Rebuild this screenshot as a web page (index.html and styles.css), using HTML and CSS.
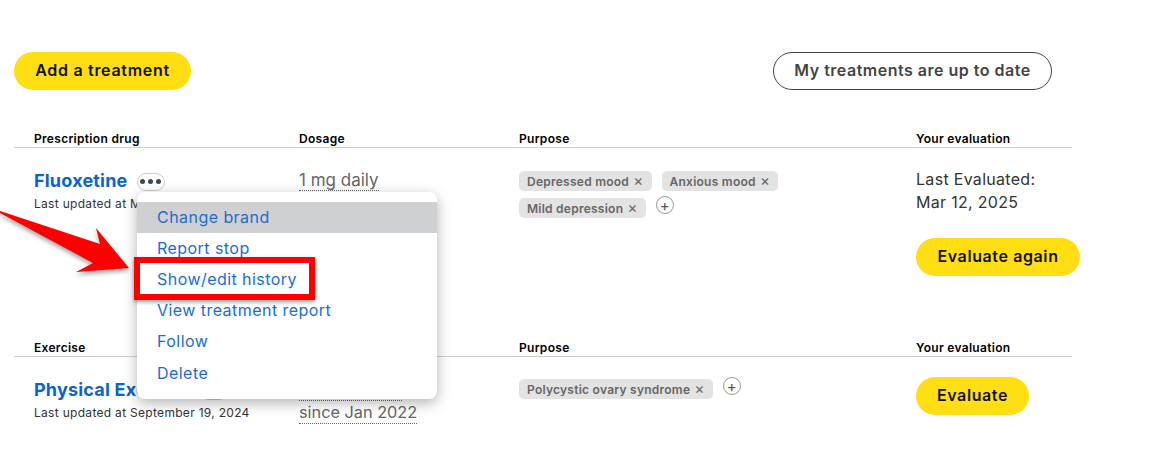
FILE: index.html
```html
<!DOCTYPE html>
<html>
    <head>
        <meta charset="utf-8">
        <title>My treatments</title>
        <link rel="stylesheet" href="styles.css">
    </head>
    <body>
        <div class="top-bar">
            <button class="button button-yellow button-add">Add a treatment</button>
            <button class="button button-outline">My treatments are up to date</button>
        </div>

        <div class="section section-first">
            <div class="row-head">
                <span>Prescription drug</span>
                <span>Dosage</span>
                <span>Purpose</span>
                <span>Your evaluation</span>
            </div>
            <div class="row">
                <div>
                    <div class="name-line">
                        <a class="name">Fluoxetine</a>
                        <span class="dots"><i></i><i></i><i></i></span>
                    </div>
                    <div class="updated">Last updated at March 12, 2025</div>
                </div>
                <div class="dosage"><span class="dotted">1 mg daily</span></div>
                <div class="tags">
                    <span class="tag">Depressed mood <b>×</b></span>
                    <span class="tag">Anxious mood <b>×</b></span>
                    <span class="tag">Mild depression <b>×</b></span>
                    <span class="plus">+</span>
                </div>
                <div class="evaluation">
                    <div class="eval-text">Last Evaluated:<br>Mar 12, 2025</div>
                    <button class="button button-yellow button-eval">Evaluate again</button>
                </div>
            </div>
        </div>

        <div class="section">
            <div class="row-head">
                <span>Exercise</span>
                <span>Frequency</span>
                <span>Purpose</span>
                <span>Your evaluation</span>
            </div>
            <div class="row">
                <div>
                    <div class="name-line">
                        <a class="name">Physical Exercise</a>
                        <span class="dots"><i></i><i></i><i></i></span>
                    </div>
                    <div class="updated">Last updated at September 19, 2024</div>
                </div>
                <div class="dosage dosage-two">
                    <span class="dotted">3 times/week</span><br>
                    <span class="dotted">since Jan 2022</span>
                </div>
                <div class="tags tags-second">
                    <span class="tag">Polycystic ovary syndrome <b>×</b></span>
                    <span class="plus">+</span>
                </div>
                <div class="evaluation evaluation-second">
                    <button class="button button-yellow button-eval">Evaluate</button>
                </div>
            </div>
        </div>

        <ul class="menu">
            <li class="active">Change brand</li>
            <li>Report stop</li>
            <li>Show/edit history</li>
            <li>View treatment report</li>
            <li>Follow</li>
            <li>Delete</li>
        </ul>

        <!-- annotation on top of the screenshot -->
        <svg class="arrow" width="140" height="80" viewBox="0 0 140 80">
            <polygon points="0,1 100,34 96,18 129,58 76,62 93,53 0,3" fill="#fe0000"/>
        </svg>
        <div class="highlight"></div>
    </body>
</html>
```

FILE: styles.css
```css
body {
    margin: 0;
    background-color: white;
    font-family: "Inter", "Liberation Sans", sans-serif;
    color: #111;
}

.top-bar {
    display: flex;
    justify-content: space-between;
    padding: 52px 106px 0 14px;
}

.button {
    border-radius: 19px;
    font-family: inherit;
    font-size: 16px;
    font-weight: 600;
    letter-spacing: 0.6px;
    height: 38px;
    padding: 0 0 2px;
}

.button-yellow {
    background-color: #ffdf14;
    border: none;
    color: #111;
}

.button-add {
    width: 177px;
    letter-spacing: 0.7px;
}

.button-outline {
    width: 279px;
    background-color: white;
    border: 1px solid #444;
    color: #444;
    letter-spacing: 0.5px;
}

.section {
    margin: 0 86px 0 14px;
}

.section-first {
    margin-top: 41px;
    height: 209px;
}

.row-head, .row {
    display: grid;
    grid-template-columns: 265px 220px 397px 156px;
    padding-left: 20px;
}

.row-head {
    height: 16px;
    border-bottom: 1px solid #d0d0d0;
    font-size: 12px;
    font-weight: 600;
    letter-spacing: 0.3px;
    line-height: 16px;
    color: #000;
}

.row {
    padding-top: 20px;
}

.name-line {
    display: flex;
    align-items: center;
    height: 26px;
    margin-top: -1px;
}

.name {
    font-size: 18px;
    font-weight: 700;
    color: #0b64c8;
    letter-spacing: 0.2px;
}

.dots {
    display: flex;
    justify-content: center;
    align-items: center;
    gap: 3px;
    width: 26px;
    height: 16px;
    margin: 3px 0 0 9px;
    border: 1px solid #ccc;
    border-radius: 9px;
}

.dots i {
    width: 5px;
    height: 5px;
    border-radius: 50%;
    background-color: #3b4754;
}

.updated {
    font-size: 12px;
    color: #333;
    line-height: 18px;
    letter-spacing: 0.3px;
    margin-top: 2px;
}

.dosage {
    font-size: 17px;
    color: #666;
    line-height: 24px;
}

.dotted {
    border-bottom: 1px dotted #666;
}

.dosage-two {
    font-size: 16.3px;
    line-height: 23px;
    padding-top: 1px;
}

.dosage-two .dotted {
    padding-bottom: 1px;
}

.tags {
    display: flex;
    flex-wrap: wrap;
    align-items: flex-start;
    align-content: flex-start;
    gap: 7px 10px;
    padding-top: 3px;
    width: 300px;
}

.tags-second {
    width: 340px;
    padding-top: 2px;
}

.tag {
    height: 20px;
    background-color: #e3e3e3;
    border-radius: 5px;
    color: #666;
    font-size: 12px;
    font-weight: 600;
    letter-spacing: 0.25px;
    line-height: 20px;
    padding: 0 8px;
    white-space: nowrap;
}

.tag b {
    font-weight: 400;
    font-size: 15px;
    margin-left: 1px;
}

.plus {
    width: 18px;
    height: 18px;
    margin-top: -2px;
    border: 1px solid #999;
    border-radius: 50%;
    color: #555;
    font-size: 15px;
    line-height: 17px;
    text-align: center;
    box-sizing: border-box;
}

.evaluation {
    font-size: 16px;
    color: #333;
}

.eval-text {
    line-height: 23px;
    letter-spacing: 0.3px;
}

.button-eval {
    display: block;
    margin-top: 24px;
    width: 164px;
}

.evaluation-second .button-eval {
    margin-top: 0;
    width: 113px;
}

.menu {
    position: absolute;
    left: 137px;
    top: 192px;
    width: 300px;
    height: 207px;
    box-sizing: border-box;
    margin: 0;
    padding: 10px 0 0;
    list-style: none;
    background-color: white;
    border-radius: 8px;
    box-shadow: 0 4px 14px rgba(0, 0, 0, 0.3);
}

.menu li {
    height: 31px;
    line-height: 31px;
    padding-left: 20px;
    font-size: 16px;
    letter-spacing: 0.45px;
    color: #1a6dd0;
}

.menu li:last-child {
    margin-top: 1px;
}

.menu .active {
    background-color: #cfd0d1;
}

.arrow {
    position: absolute;
    left: 0;
    top: 210px;
    filter: drop-shadow(0 3px 2px rgba(0, 0, 0, 0.35));
}

.highlight {
    position: absolute;
    left: 134px;
    top: 257px;
    width: 181px;
    height: 43px;
    box-sizing: border-box;
    border: 6px solid #fe0000;
    box-shadow: 0 2px 4px rgba(0, 0, 0, 0.4);
}
```
